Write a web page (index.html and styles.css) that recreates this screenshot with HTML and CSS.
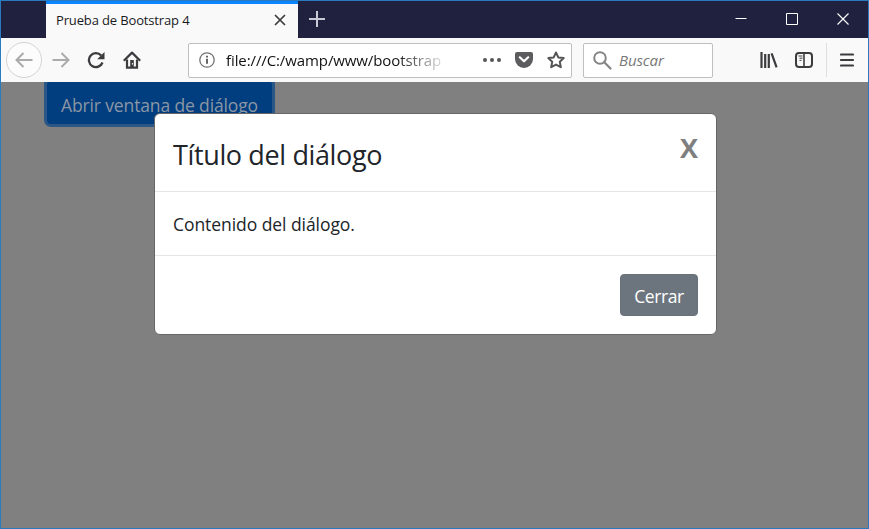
FILE: index.html
```html
<!DOCTYPE html>
<html lang="es">
<head>
<meta charset="utf-8">
<title>Prueba de Bootstrap 4</title>
<link rel="stylesheet" href="styles.css">
</head>
<body>
<div class="window">
  <header class="titlebar">
    <div class="tab">
      <span class="tab-title">Prueba de Bootstrap 4</span>
      <svg class="tab-close" width="12" height="12" viewBox="0 0 12 12"><path d="M1 1l10 10M11 1L1 11" stroke="#3c3c3f" stroke-width="1.7"/></svg>
    </div>
    <svg class="new-tab" width="16" height="16" viewBox="0 0 16 16"><path d="M8 0v16M0 8h16" stroke="#c9c9d6" stroke-width="2"/></svg>
    <div class="controls">
      <svg width="12" height="12" viewBox="0 0 12 12"><path d="M.5 5.500h11" stroke="#fff"/></svg>
      <svg width="12" height="12" viewBox="0 0 12 12"><path d="M.5.5h11v11H.5z" stroke="#fff" fill="none"/></svg>
      <svg width="12" height="12" viewBox="0 0 12 12"><path d="M.5.5l11 11M11.500.5l-11 11" stroke="#fff" stroke-width="1.1"/></svg>
    </div>
  </header>
  <nav class="toolbar">
    <span class="back"><svg width="18" height="16" viewBox="0 0 18 16"><path d="M17.500 8H1.500M8.500 1L1.500 8l7 7" fill="none" stroke="#ababab" stroke-width="2"/></svg></span>
    <svg class="forward" width="18" height="16" viewBox="0 0 18 16"><path d="M.5 8h16M9.500 1l7 7-7 7" fill="none" stroke="#ababab" stroke-width="2"/></svg>
    <svg class="reload" width="18" height="18" viewBox="0 0 18 18"><path d="M14.200 4.500A7 7 0 1 0 15.500 11.500" fill="none" stroke="#3c3c3f" stroke-width="2.300"/><path d="M17.500 1v7.300h-7.300z" fill="#3c3c3f"/></svg>
    <svg class="home" width="18" height="18" viewBox="0 0 18 18"><path d="M.8 9.800L9 1.600l8.200 8.200" fill="none" stroke="#3c3c3f" stroke-width="2.200" stroke-linejoin="round"/><path d="M4 8.500v8.200h10V8.500" fill="none" stroke="#3c3c3f" stroke-width="2.200"/><path d="M7.200 9h3.600v8H7.200z" fill="#3c3c3f"/><path d="M9.400 12v1.600" stroke="#fff"/></svg>
    <div class="field url">
      <svg class="info" width="16" height="16" viewBox="0 0 16 16"><circle cx="8" cy="8" r="7.200" fill="none" stroke="#737373" stroke-width="1.300"/><path d="M8 6.800v5M8 3.700v1.900" stroke="#555" stroke-width="1.800"/></svg>
      <span class="address">file:///C:/wamp/www/bootstrap</span>
      <svg class="dots" width="18" height="4" viewBox="0 0 18 4"><circle cx="2" cy="2" r="2"/><circle cx="9" cy="2" r="2"/><circle cx="16" cy="2" r="2"/></svg>
      <svg class="pocket" width="18" height="16" viewBox="0 0 18 16"><path d="M2 0h14q2 0 2 2v5a9 9 0 0 1-18 0V2q0-2 2-2z" fill="#5c5c5e"/><path d="M4.800 5.300L9 9.300l4.200-4" fill="none" stroke="#fff" stroke-width="2.200" stroke-linecap="round" stroke-linejoin="round"/></svg>
      <svg class="star" width="18" height="18" viewBox="0 0 18 18"><path d="M9 1.500l2.300 4.900 5.400.7-3.900 3.700 1 5.400L9 13.600l-4.800 2.600 1-5.400-3.900-3.700 5.400-.7z" fill="none" stroke="#555557" stroke-width="2" stroke-linejoin="round"/></svg>
    </div>
    <div class="field search">
      <svg width="19" height="19" viewBox="0 0 19 19"><circle cx="7" cy="7" r="5.800" fill="none" stroke="#858585" stroke-width="2"/><path d="M11.300 11.300l6.200 6.200" stroke="#858585" stroke-width="2.200" stroke-linecap="round"/></svg>
      <span class="placeholder">Buscar</span>
    </div>
    <svg class="library" width="18" height="16" viewBox="0 0 18 16"><path d="M1.500 0v16M5.200 2v14M8.800 2v14M11.600 1.300l5 14" stroke="#3c3c3f" stroke-width="2.200"/></svg>
    <svg class="sidebar" width="18" height="16" viewBox="0 0 18 16"><rect x="1" y="1" width="16" height="14" rx="3" fill="none" stroke="#3c3c3f" stroke-width="2"/><path d="M9 1v14" stroke="#3c3c3f" stroke-width="1.600"/><path d="M3.500 4h4M4.500 6.200h3M4.500 8.400h2" stroke="#3c3c3f" stroke-width="1"/></svg>
    <span class="divider"></span>
    <svg class="menu" width="14" height="14" viewBox="0 0 14 14"><path d="M1 1.500h12M1 7h12M1 12.500h12" stroke="#3c3c3f" stroke-width="2.200" stroke-linecap="round"/></svg>
  </nav>
  <main class="page">
    <button class="open">Abrir ventana de diálogo</button>
    <section class="modal">
      <div class="modal-header">
        <h4>Título del diálogo</h4>
        <button class="close">X</button>
      </div>
      <div class="modal-body">Contenido del diálogo.</div>
      <div class="modal-footer"><button class="dismiss">Cerrar</button></div>
    </section>
  </main>
</div>
</body>
</html>
```
FILE: styles.css
```css
* { box-sizing: border-box; }
body { margin: 0; font-family: "Open Sans", "Noto Sans", sans-serif; }
svg { display: block; flex: none; }
button { font-family: inherit; margin: 0; white-space: nowrap; }
.window { width: 869px; height: 529px; border: 1px solid #2a7ac0; display: flex; flex-direction: column; overflow: hidden; background: #808080; }
.titlebar { height: 37px; flex: none; display: flex; background: #20213f; padding-left: 45px; }
.tab { width: 252px; display: flex; align-items: center; justify-content: space-between; background: #f9f9fa; border-top: 3px solid #0a84ff; padding: 0 12px 0 10px; }
.tab-title { font-size: 13px; letter-spacing: -.14px; color: #1a1a1c; white-space: nowrap; margin-top: -2px; }
.tab-close { margin-top: -2px; }
.new-tab { margin: 10px 0 0 11px; }
.controls { margin: 12px 19px 0 auto; display: flex; gap: 39px; }
.toolbar { height: 44px; flex: none; display: flex; align-items: center; background: #f9f9fa; }
.back { width: 36px; height: 36px; margin-left: 5px; border: 1px solid #d4d4d6; border-radius: 50%; display: flex; align-items: center; justify-content: center; background: #fcfcfd; }
.forward { margin-left: 10px; }
.reload { margin-left: 17px; }
.home { margin-left: 18px; }
.field { height: 35px; background: #fff; border: 1px solid #bfbfc1; border-radius: 2px; display: flex; align-items: center; }
.url { width: 384px; margin-left: 47px; padding-left: 10px; }
.address { width: 218px; margin-left: 11px; font-size: 15px; letter-spacing: -.1px; white-space: nowrap; color: transparent; background: linear-gradient(90deg, #111 78%, rgba(17,17,17,.1) 100%); background-clip: text; -webkit-background-clip: text; }
.dots { margin-left: 39px; fill: #555557; }
.pocket { margin-left: 14px; }
.star { margin-left: 14px; }
.search { width: 130px; margin-left: 11px; padding-left: 9px; }
.placeholder { margin-left: 7px; font-size: 15px; font-style: italic; letter-spacing: -.1px; color: #777; }
.library { margin-left: 47px; }
.sidebar { margin-left: 17px; }
.divider { width: 1px; height: 34px; margin-left: 13px; background: #dedee0; }
.menu { margin-left: 13px; }
.page { flex: 1; position: relative; overflow: hidden; background: #808080; }
.open { display: block; height: 42px; margin-left: 46px; width: 225px; padding: 3px 0 0; border: 0; border-radius: 2px 2px 4px 4px; background: #003e80; box-shadow: 0 0 0 3px #2b5787; color: #8c96a4; font-size: 17.5px; letter-spacing: -.14px; }
.modal { position: absolute; left: 153px; top: 31px; width: 563px; height: 222px; background: #fff; border: 1px solid #666; border-radius: 6px; color: #212529; }
.modal-header { height: 78px; display: flex; justify-content: space-between; align-items: flex-start; padding: 22px 18px 0; border-bottom: 1px solid #e3e5e8; }
h4 { margin: 1px 0 0; font-size: 27px; line-height: 36px; font-weight: 400; letter-spacing: -.37px; white-space: nowrap; }
.close { border: 0; padding: 0; background: none; font-size: 27px; line-height: 24px; font-weight: 700; color: #7f7f7f; }
.modal-body { height: 64px; padding: 19px 18px 17px; font-size: 17.5px; line-height: 27px; letter-spacing: -.06px; border-bottom: 1px solid #e3e5e8; }
.modal-footer { display: flex; justify-content: flex-end; padding: 18px 18px; }
.dismiss { width: 78px; height: 42px; padding: 1px 0 0; border: 1px solid #68727a; border-radius: 4px; background: #6c757d; color: #fff; font-size: 17.5px; letter-spacing: -.4px; }
```
